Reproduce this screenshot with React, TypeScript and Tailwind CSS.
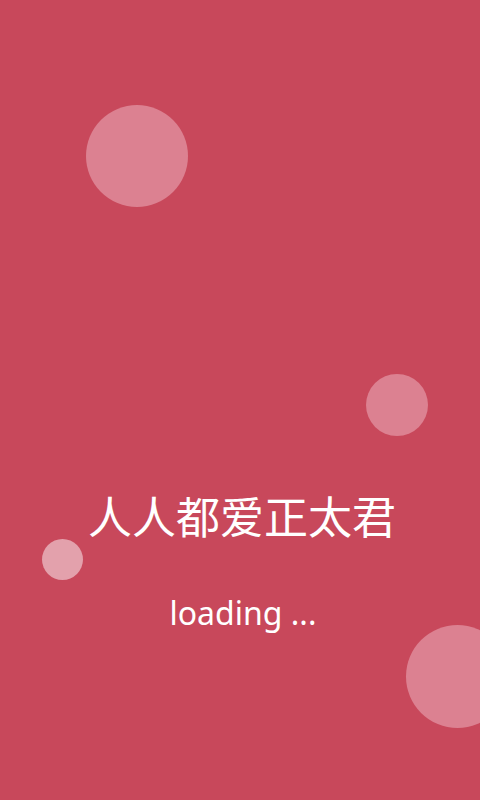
export default function App() {
  return (
    <div className="relative h-[800px] w-[480px] overflow-hidden bg-[#c8485b] font-['Noto_Sans','Noto_Sans_CJK_SC',sans-serif] text-white">
      {/* floating bubbles */}
      <div className="absolute left-[86px] top-[105px] h-[102px] w-[102px] rounded-full bg-[#dc8191]" />
      <div className="absolute left-[366px] top-[374px] h-[62px] w-[62px] rounded-full bg-[#dc8191]" />
      <div className="absolute left-[42px] top-[539px] h-[41px] w-[41px] rounded-full bg-[#e3a1ac]" />
      <div className="absolute left-[406px] top-[625px] h-[103px] w-[103px] rounded-full bg-[#dc8191]" />

      <div className="relative flex flex-col items-center pt-[488px]">
        <h1 className="pl-[4px] text-[44px] leading-[58px] font-normal">人人都爱正太君</h1>
        <p className="mt-[47px] pl-[6px] text-[32px] leading-[40px]">loading ...</p>
      </div>
    </div>
  )
}
